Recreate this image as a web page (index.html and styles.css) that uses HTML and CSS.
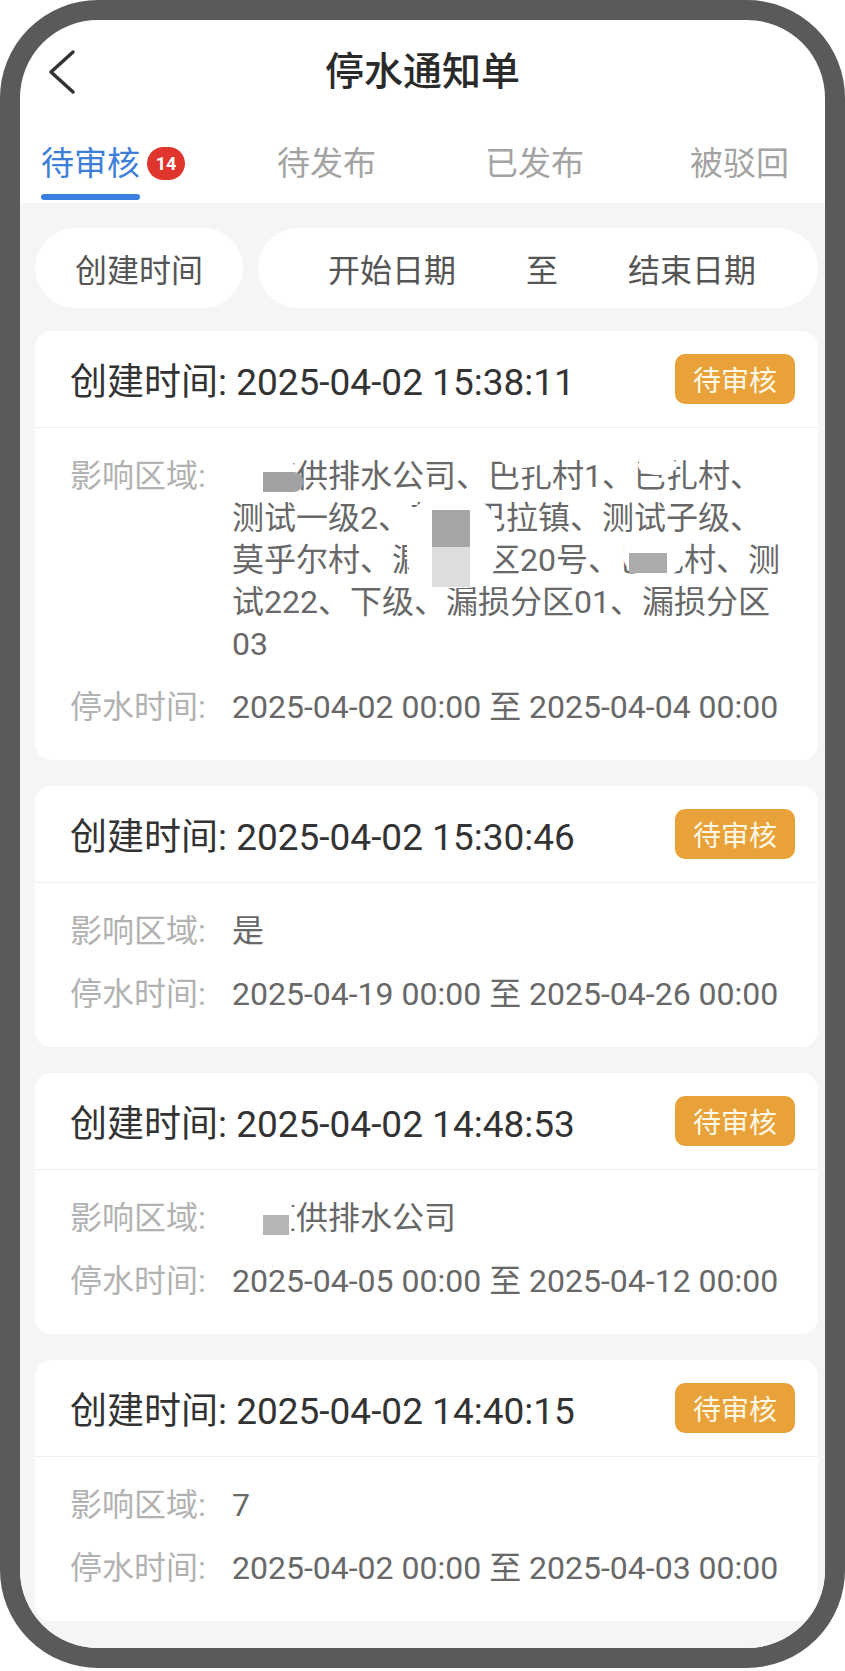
FILE: index.html
```html
<!DOCTYPE html>
<html lang="zh-CN">
<head>
<meta charset="utf-8">
<title>停水通知单</title>
<link rel="stylesheet" href="styles.css">
</head>
<body>
<div class="device">
  <div class="screen">
    <header class="nav">
      <svg class="back" width="36" height="48" viewBox="0 0 36 48"><polyline points="27,4 5,24 27,44" /></svg>
      <h1 class="title">停水通知单</h1>
    </header>
    <nav class="tabs">
      <div class="tab active"><span class="tab-label">待审核</span><span class="count">14</span></div>
      <div class="tab"><span class="tab-label">待发布</span></div>
      <div class="tab"><span class="tab-label">已发布</span></div>
      <div class="tab"><span class="tab-label">被驳回</span></div>
    </nav>
    <main class="content">
      <div class="filters">
        <div class="pill pill-type">创建时间</div>
        <div class="pill pill-range"><span>开始日期</span><span>至</span><span>结束日期</span></div>
      </div>
      <div class="cards">
        <article class="card">
          <div class="card-head"><span class="created">创建时间: 2025-04-02 15:38:11</span><span class="status">待审核</span></div>
          <div class="card-body">
            <div class="row"><span class="label">影响区域:</span><span class="value">某某供排水公司、巴扎村1、巴扎村、测试一级2、某某巴拉镇、测试子级、莫乎尔村、漏损分区20号、巴扎村、测试222、下级、漏损分区01、漏损分区03</span></div>
            <div class="row"><span class="label">停水时间:</span><span class="value">2025-04-02 00:00 至 2025-04-04 00:00</span></div>
            <span class="mask m1"></span><span class="mask m1g"></span>
            <span class="mask m2"></span><span class="mask m3"></span>
            <span class="mask m4"></span><span class="mask m4g"></span><span class="mask m4l"></span>
            <span class="mask m5"></span><span class="mask m5g"></span>
          </div>
        </article>
        <article class="card">
          <div class="card-head"><span class="created">创建时间: 2025-04-02 15:30:46</span><span class="status">待审核</span></div>
          <div class="card-body">
            <div class="row"><span class="label">影响区域:</span><span class="value">是</span></div>
            <div class="row"><span class="label">停水时间:</span><span class="value">2025-04-19 00:00 至 2025-04-26 00:00</span></div>
          </div>
        </article>
        <article class="card">
          <div class="card-head"><span class="created">创建时间: 2025-04-02 14:48:53</span><span class="status">待审核</span></div>
          <div class="card-body">
            <div class="row"><span class="label">影响区域:</span><span class="value">某某供排水公司</span></div>
            <div class="row"><span class="label">停水时间:</span><span class="value">2025-04-05 00:00 至 2025-04-12 00:00</span></div>
            <span class="mask m6"></span><span class="mask m6g"></span>
          </div>
        </article>
        <article class="card">
          <div class="card-head"><span class="created">创建时间: 2025-04-02 14:40:15</span><span class="status">待审核</span></div>
          <div class="card-body">
            <div class="row"><span class="label">影响区域:</span><span class="value">7</span></div>
            <div class="row"><span class="label">停水时间:</span><span class="value">2025-04-02 00:00 至 2025-04-03 00:00</span></div>
          </div>
        </article>
      </div>
    </main>
  </div>
</div>
</body>
</html>
```

FILE: styles.css
```css
* { box-sizing: border-box; }
html, body { margin: 0; padding: 0; background: #ffffff; }
body { font-family: Roboto, "Noto Sans CJK SC", sans-serif; }

.device {
  width: 845px;
  height: 1668px;
  border: 20px solid #5a5a5a;
  border-radius: 98px;
  overflow: hidden;
  background: #ffffff;
}
.screen { height: 100%; display: flex; flex-direction: column; }

.nav {
  position: relative;
  height: 104px;
  flex: none;
  display: flex;
  align-items: center;
  justify-content: center;
}
.back { position: absolute; left: 26px; top: 28px; }
.back polyline { fill: none; stroke: #333333; stroke-width: 3.5; stroke-linecap: round; stroke-linejoin: round; }
.title { margin: 0; font-size: 39px; font-weight: 500; color: #2a2a2a; line-height: 1; }

.tabs {
  height: 79px;
  flex: none;
  display: grid;
  grid-template-columns: 236px 208px 205px 1fr;
  padding-left: 21px;
  align-items: center;
}
.tab { display: flex; align-items: center; font-size: 33px; line-height: 40px; color: #a3a3a3; }
.tab-label { position: relative; }
.tab.active .tab-label { color: #3d7fd8; }
.tab.active .tab-label::after {
  content: "";
  position: absolute;
  left: 0; right: 0;
  top: calc(100% + 10px);
  height: 6px;
  border-radius: 3px;
  background: #3b7fe0;
}
.count {
  margin-left: 7px;
  width: 38px; height: 33px;
  border-radius: 17px;
  background: #e0352c;
  color: #ffffff;
  font-size: 18px;
  font-weight: 700;
  line-height: 33px;
  text-align: center;
}

.content { flex: 1; background: #f5f5f5; padding: 25px 7px 0 15px; }
.filters { display: flex; gap: 15px; height: 80px; }
.pill {
  background: #ffffff;
  border-radius: 40px;
  display: flex;
  align-items: center;
  justify-content: center;
  font-size: 32px;
  color: #555555;
}
.pill-type { width: 208px; }
.pill-range { flex: 1; gap: 70px; padding-left: 8px; }

.cards { margin-top: 23px; display: flex; flex-direction: column; gap: 26px; }
.card { background: #ffffff; border-radius: 16px; }
.card-head {
  height: 97px;
  border-bottom: 1px solid #efefef;
  padding: 0 23px 0 35px;
  display: flex;
  align-items: center;
  justify-content: space-between;
}
.created { font-size: 37px; color: #333333; }
.status {
  width: 120px; height: 50px;
  border-radius: 10px;
  background: #e9a23a;
  color: #fff8e6;
  font-size: 28px;
  display: flex; align-items: center; justify-content: center;
}
.card-body { position: relative; padding: 27px 31px 32px 35px; }
.row { display: flex; font-size: 32px; line-height: 42px; }
.row + .row { margin-top: 21px; }
.label { flex: none; width: 162px; color: #b2b2b2; }
.value { flex: 1; color: #686868; }

.mask { position: absolute; background: #ffffff; }
.m1 { left: 183px; top: 25px; width: 78px; height: 41px; border-radius: 22px; }
.m1g { left: 228px; top: 44px; width: 40px; height: 20px; border-radius: 0 9px 9px 0; background: #a2a2a2; }
.m2 { left: 465px; top: 22px; width: 45px; height: 18px; border-radius: 50%; }
.m3 { left: 603px; top: 28px; width: 39px; height: 19px; border-radius: 50%; }
.m4 { left: 372px; top: 70px; width: 90px; height: 90px; border-radius: 30px; }
.m4g { left: 397px; top: 82px; width: 38px; height: 38px; background: #a6a6a6; }
.m4l { left: 397px; top: 119px; width: 38px; height: 40px; background: #dddddd; }
.m5 { left: 588px; top: 105px; width: 62px; height: 42px; border-radius: 20px; }
.m5g { left: 594px; top: 125px; width: 38px; height: 20px; background: #ababab; }
.m6 { left: 190px; top: 27px; width: 70px; height: 41px; border-radius: 20px; }
.m6g { left: 228px; top: 45px; width: 26px; height: 20px; background: #b5b5b5; }
```
